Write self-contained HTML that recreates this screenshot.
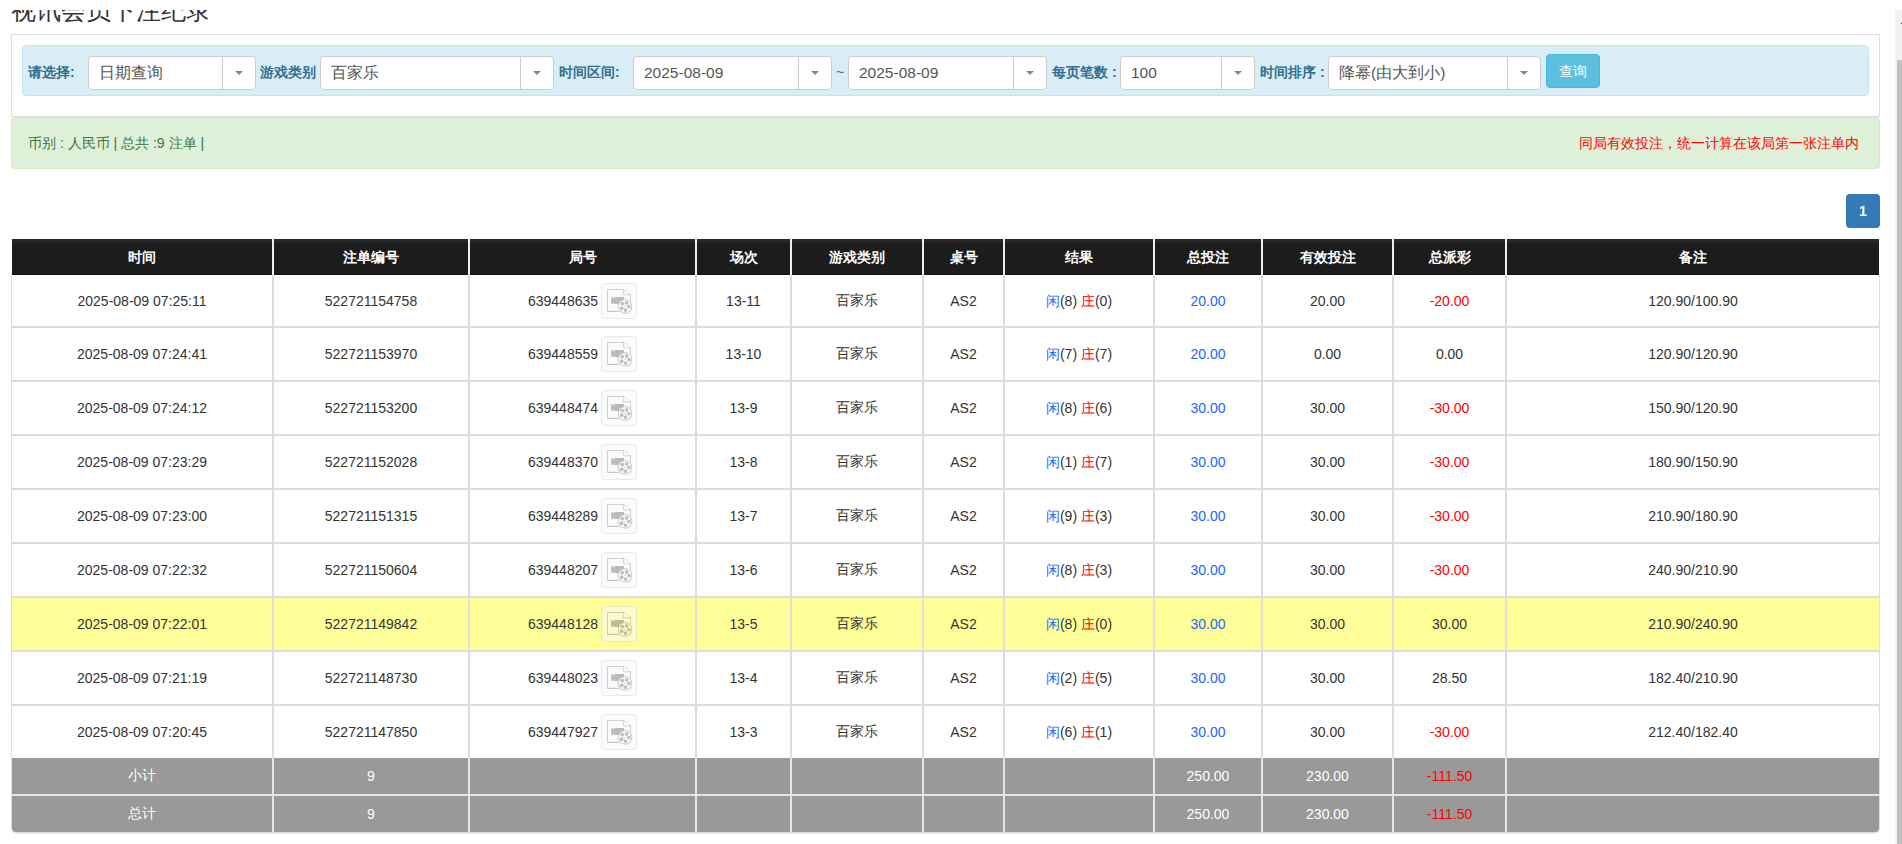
<!DOCTYPE html>
<html><head><meta charset="utf-8">
<style>
*{box-sizing:border-box;margin:0;padding:0}
html,body{width:1902px;height:844px;overflow:hidden;background:#fff;font-family:"Liberation Sans",sans-serif;color:#333;font-size:14px}
.a{position:absolute}
#title{left:11px;top:-5px;font-size:25px;line-height:30px;color:#333;white-space:nowrap}
#mask{left:0;top:0;width:1902px;height:10px;background:#fff}
#panel{left:11px;top:34px;width:1869px;height:83px;border:1px solid #ddd;background:#fff}
#info{left:22px;top:45px;width:1847px;height:51px;background:#d9edf7;border:1px solid #bce8f1;border-radius:4px}
.lbl{top:64px;font-size:14px;line-height:17px;font-weight:bold;color:#31708f;white-space:nowrap}
.sel{top:56px;height:34px;border:1px solid #ccc;border-radius:4px;background:#fff}
.sel .t{position:absolute;left:10px;top:6.5px;font-size:15.5px;line-height:18px;color:#555;white-space:nowrap}
.sel .d{position:absolute;top:0;bottom:0;width:1px;background:#ccc}
.sel .c{position:absolute;top:14px;width:0;height:0;border-left:4px solid transparent;border-right:4px solid transparent;border-top:4px solid #888}
#btn{left:1546px;top:54px;width:54px;height:34px;background:#5bc0de;border:1px solid #46b8da;border-radius:4px;color:#fff;font-size:14px;line-height:32px;text-align:center}
#alert{left:11px;top:117px;width:1869px;height:52px;background:#dff0d8;border:1px solid #d6e9c6;border-radius:4px}
#alert .l{position:absolute;left:16px;top:16px;color:#3c763d;font-size:14px;line-height:18px;white-space:nowrap}
#alert .r{position:absolute;right:20px;top:16px;color:#f00;font-size:14px;line-height:18px;white-space:nowrap}
#page{left:1846px;top:194px;width:34px;height:34px;background:#337ab7;border-radius:4px;color:#fff;font-weight:bold;font-size:14px;line-height:34px;text-align:center}
#sb{left:1895px;top:10px;width:17px;height:900px;background:#f1f1f1}
#sbt{left:1897px;top:60px;width:13px;height:900px;background:#c1c1c1}
.th-bg{left:12px;top:239px;width:1867px;height:36px;background:linear-gradient(#2a2a2a,#262626 3px,#1c1c1c 5px,#1c1c1c 35px,#121212 35px)}
.hsep{top:238px;width:2px;height:37px;background:#eee}
.cell{display:flex;align-items:center;justify-content:center;white-space:nowrap;height:30px}
.th{top:243px;color:#fff;font-weight:bold;font-size:14px}
.td{color:#333;font-size:14px}
.tg{color:#fff;font-size:14px}
.tr{left:12px;width:1867px;background:#fff}
.tr.y{background:#ffff99}
.rsep{left:11px;width:1869px;height:2px;background:#ddd}
.gr{left:12px;width:1867px;background:#999}
.gr2{border-radius:0 0 4px 4px;box-shadow:0 1px 2px rgba(0,0,0,.2)}
.gsep{left:12px;width:1867px;height:2px;background:#e5e5e5}
.vsep{top:275px;height:483px;width:2px;background:#ddd}
.gvsep{top:758px;height:74px;width:2px;background:#e5e5e5}
.vedge{top:275px;height:554px;width:1px;background:#ddd}
.bl{color:#1a66ff;font-weight:normal}
.rd{color:#f00;font-weight:normal}
.ic{display:inline-block;vertical-align:middle;width:36px;height:36px;margin-left:3px;border:1px solid rgba(0,0,0,.07);border-radius:4px;background:rgba(247,247,247,.55)}
.jg{position:relative;top:1px;font-style:normal}
.ji{display:inline-flex;align-items:center;font-style:normal}
.ic svg{display:block;margin:-1px}
</style></head><body>
<svg width="0" height="0" style="position:absolute"><defs><mask id="rm"><rect width="36" height="36" fill="#fff"/><circle cx="24.1" cy="23.4" r="7.2" fill="#000"/></mask></defs></svg>
<div id="title" class="a">视讯会员下注纪录</div>
<div id="mask" class="a"></div>
<div id="panel" class="a"></div>
<div id="info" class="a"></div>
<div class="a lbl" style="left:28px">请选择:</div>
<div class="a sel" style="left:88px;width:168px"><span class="t">日期查询</span><i class="d" style="left:133px"></i><i class="c" style="left:146px"></i></div>
<div class="a lbl" style="left:260px">游戏类别</div>
<div class="a sel" style="left:320px;width:234px"><span class="t">百家乐</span><i class="d" style="left:199px"></i><i class="c" style="left:212px"></i></div>
<div class="a lbl" style="left:559px">时间区间:</div>
<div class="a sel" style="left:633px;width:199px"><span class="t">2025-08-09</span><i class="d" style="left:164px"></i><i class="c" style="left:177px"></i></div>
<div class="a" style="left:836px;top:64px;line-height:17px;font-size:14px;color:#31708f">~</div>
<div class="a sel" style="left:848px;width:199px"><span class="t">2025-08-09</span><i class="d" style="left:164px"></i><i class="c" style="left:177px"></i></div>
<div class="a lbl" style="left:1052px">每页笔数 :</div>
<div class="a sel" style="left:1120px;width:135px"><span class="t">100</span><i class="d" style="left:100px"></i><i class="c" style="left:113px"></i></div>
<div class="a lbl" style="left:1260px">时间排序 :</div>
<div class="a sel" style="left:1328px;width:213px"><span class="t">降幂(由大到小)</span><i class="d" style="left:178px"></i><i class="c" style="left:191px"></i></div>
<div id="btn" class="a">查询</div>
<div id="alert" class="a"><span class="l">币别 : 人民币 | 总共 :9 注单 |</span><span class="r">同局有效投注，统一计算在该局第一张注单内</span></div>
<div id="page" class="a">1</div>
<!--TABLE-->
<div class="a th-bg"></div>
<i class="a hsep" style="left:272px"></i>
<i class="a hsep" style="left:468px"></i>
<i class="a hsep" style="left:695px"></i>
<i class="a hsep" style="left:790px"></i>
<i class="a hsep" style="left:922px"></i>
<i class="a hsep" style="left:1003px"></i>
<i class="a hsep" style="left:1153px"></i>
<i class="a hsep" style="left:1261px"></i>
<i class="a hsep" style="left:1392px"></i>
<i class="a hsep" style="left:1505px"></i>
<div class="a cell th" style="left:12px;width:260px">时间</div>
<div class="a cell th" style="left:274px;width:194px">注单编号</div>
<div class="a cell th" style="left:470px;width:225px">局号</div>
<div class="a cell th" style="left:697px;width:93px">场次</div>
<div class="a cell th" style="left:792px;width:130px">游戏类别</div>
<div class="a cell th" style="left:924px;width:79px">桌号</div>
<div class="a cell th" style="left:1005px;width:148px">结果</div>
<div class="a cell th" style="left:1155px;width:106px">总投注</div>
<div class="a cell th" style="left:1263px;width:129px">有效投注</div>
<div class="a cell th" style="left:1394px;width:111px">总派彩</div>
<div class="a cell th" style="left:1507px;width:372px">备注</div>
<div class="a tr" style="top:275px;height:51px"></div>
<div class="a cell td" style="left:12px;width:260px;top:286px"><span>2025-08-09 07:25:11</span></div>
<div class="a cell td" style="left:274px;width:194px;top:286px"><span>522721154758</span></div>
<div class="a cell td" style="left:470px;width:225px;top:286px"><span><em class="ji">639448635<span class="ic"><svg width="36" height="36" viewBox="0 0 36 36"><g mask="url(#rm)"><path d="M6.5 6.5H22.6L29.5 11.8V28.3H6.5Z" fill="none" stroke="rgba(0,0,0,.17)" stroke-width="1"/><path d="M22.6 6.5V11.8H29.5" fill="rgba(255,255,255,.6)" stroke="rgba(0,0,0,.17)" stroke-width="1"/><path d="M6.5 28.4H17" stroke="rgba(0,0,0,.12)" stroke-width="1"/><path d="M10.2 14.2H11.6L13.3 16V14.1H23.1V21.1H13.3V19.6L11.6 21H10.2Z" fill="rgba(0,0,0,.26)"/></g><circle cx="24.1" cy="23.4" r="6.8" fill="none" stroke="rgba(0,0,0,.2)" stroke-width="1"/><g fill="rgba(0,0,0,.24)"><circle cx="21.3" cy="20.6" r="1.85"/><circle cx="25.6" cy="19.9" r="1.85"/><circle cx="27.9" cy="23.6" r="1.85"/><circle cx="24.5" cy="27.1" r="1.85"/><circle cx="20.7" cy="25.2" r="1.85"/><rect x="23.3" y="23" width="1.6" height=".8"/></g></svg></span></em></span></div>
<div class="a cell td" style="left:697px;width:93px;top:286px"><span>13-11</span></div>
<div class="a cell td" style="left:792px;width:130px;top:286px"><span>百家乐</span></div>
<div class="a cell td" style="left:924px;width:79px;top:286px"><span>AS2</span></div>
<div class="a cell td" style="left:1005px;width:148px;top:286px"><span><em class="jg"><b class="bl">闲</b>(8) <b class="rd">庄</b>(0)</em></span></div>
<div class="a cell td" style="left:1155px;width:106px;top:286px"><span><span class="bl">20.00</span></span></div>
<div class="a cell td" style="left:1263px;width:129px;top:286px"><span>20.00</span></div>
<div class="a cell td" style="left:1394px;width:111px;top:286px"><span><span class="rd">-20.00</span></span></div>
<div class="a cell td" style="left:1507px;width:372px;top:286px"><span>120.90/100.90</span></div>
<div class="a tr" style="top:328px;height:52px"></div>
<div class="a cell td" style="left:12px;width:260px;top:339px"><span>2025-08-09 07:24:41</span></div>
<div class="a cell td" style="left:274px;width:194px;top:339px"><span>522721153970</span></div>
<div class="a cell td" style="left:470px;width:225px;top:339px"><span><em class="ji">639448559<span class="ic"><svg width="36" height="36" viewBox="0 0 36 36"><g mask="url(#rm)"><path d="M6.5 6.5H22.6L29.5 11.8V28.3H6.5Z" fill="none" stroke="rgba(0,0,0,.17)" stroke-width="1"/><path d="M22.6 6.5V11.8H29.5" fill="rgba(255,255,255,.6)" stroke="rgba(0,0,0,.17)" stroke-width="1"/><path d="M6.5 28.4H17" stroke="rgba(0,0,0,.12)" stroke-width="1"/><path d="M10.2 14.2H11.6L13.3 16V14.1H23.1V21.1H13.3V19.6L11.6 21H10.2Z" fill="rgba(0,0,0,.26)"/></g><circle cx="24.1" cy="23.4" r="6.8" fill="none" stroke="rgba(0,0,0,.2)" stroke-width="1"/><g fill="rgba(0,0,0,.24)"><circle cx="21.3" cy="20.6" r="1.85"/><circle cx="25.6" cy="19.9" r="1.85"/><circle cx="27.9" cy="23.6" r="1.85"/><circle cx="24.5" cy="27.1" r="1.85"/><circle cx="20.7" cy="25.2" r="1.85"/><rect x="23.3" y="23" width="1.6" height=".8"/></g></svg></span></em></span></div>
<div class="a cell td" style="left:697px;width:93px;top:339px"><span>13-10</span></div>
<div class="a cell td" style="left:792px;width:130px;top:339px"><span>百家乐</span></div>
<div class="a cell td" style="left:924px;width:79px;top:339px"><span>AS2</span></div>
<div class="a cell td" style="left:1005px;width:148px;top:339px"><span><em class="jg"><b class="bl">闲</b>(7) <b class="rd">庄</b>(7)</em></span></div>
<div class="a cell td" style="left:1155px;width:106px;top:339px"><span><span class="bl">20.00</span></span></div>
<div class="a cell td" style="left:1263px;width:129px;top:339px"><span>0.00</span></div>
<div class="a cell td" style="left:1394px;width:111px;top:339px"><span>0.00</span></div>
<div class="a cell td" style="left:1507px;width:372px;top:339px"><span>120.90/120.90</span></div>
<div class="a tr" style="top:382px;height:52px"></div>
<div class="a cell td" style="left:12px;width:260px;top:393px"><span>2025-08-09 07:24:12</span></div>
<div class="a cell td" style="left:274px;width:194px;top:393px"><span>522721153200</span></div>
<div class="a cell td" style="left:470px;width:225px;top:393px"><span><em class="ji">639448474<span class="ic"><svg width="36" height="36" viewBox="0 0 36 36"><g mask="url(#rm)"><path d="M6.5 6.5H22.6L29.5 11.8V28.3H6.5Z" fill="none" stroke="rgba(0,0,0,.17)" stroke-width="1"/><path d="M22.6 6.5V11.8H29.5" fill="rgba(255,255,255,.6)" stroke="rgba(0,0,0,.17)" stroke-width="1"/><path d="M6.5 28.4H17" stroke="rgba(0,0,0,.12)" stroke-width="1"/><path d="M10.2 14.2H11.6L13.3 16V14.1H23.1V21.1H13.3V19.6L11.6 21H10.2Z" fill="rgba(0,0,0,.26)"/></g><circle cx="24.1" cy="23.4" r="6.8" fill="none" stroke="rgba(0,0,0,.2)" stroke-width="1"/><g fill="rgba(0,0,0,.24)"><circle cx="21.3" cy="20.6" r="1.85"/><circle cx="25.6" cy="19.9" r="1.85"/><circle cx="27.9" cy="23.6" r="1.85"/><circle cx="24.5" cy="27.1" r="1.85"/><circle cx="20.7" cy="25.2" r="1.85"/><rect x="23.3" y="23" width="1.6" height=".8"/></g></svg></span></em></span></div>
<div class="a cell td" style="left:697px;width:93px;top:393px"><span>13-9</span></div>
<div class="a cell td" style="left:792px;width:130px;top:393px"><span>百家乐</span></div>
<div class="a cell td" style="left:924px;width:79px;top:393px"><span>AS2</span></div>
<div class="a cell td" style="left:1005px;width:148px;top:393px"><span><em class="jg"><b class="bl">闲</b>(8) <b class="rd">庄</b>(6)</em></span></div>
<div class="a cell td" style="left:1155px;width:106px;top:393px"><span><span class="bl">30.00</span></span></div>
<div class="a cell td" style="left:1263px;width:129px;top:393px"><span>30.00</span></div>
<div class="a cell td" style="left:1394px;width:111px;top:393px"><span><span class="rd">-30.00</span></span></div>
<div class="a cell td" style="left:1507px;width:372px;top:393px"><span>150.90/120.90</span></div>
<div class="a tr" style="top:436px;height:52px"></div>
<div class="a cell td" style="left:12px;width:260px;top:447px"><span>2025-08-09 07:23:29</span></div>
<div class="a cell td" style="left:274px;width:194px;top:447px"><span>522721152028</span></div>
<div class="a cell td" style="left:470px;width:225px;top:447px"><span><em class="ji">639448370<span class="ic"><svg width="36" height="36" viewBox="0 0 36 36"><g mask="url(#rm)"><path d="M6.5 6.5H22.6L29.5 11.8V28.3H6.5Z" fill="none" stroke="rgba(0,0,0,.17)" stroke-width="1"/><path d="M22.6 6.5V11.8H29.5" fill="rgba(255,255,255,.6)" stroke="rgba(0,0,0,.17)" stroke-width="1"/><path d="M6.5 28.4H17" stroke="rgba(0,0,0,.12)" stroke-width="1"/><path d="M10.2 14.2H11.6L13.3 16V14.1H23.1V21.1H13.3V19.6L11.6 21H10.2Z" fill="rgba(0,0,0,.26)"/></g><circle cx="24.1" cy="23.4" r="6.8" fill="none" stroke="rgba(0,0,0,.2)" stroke-width="1"/><g fill="rgba(0,0,0,.24)"><circle cx="21.3" cy="20.6" r="1.85"/><circle cx="25.6" cy="19.9" r="1.85"/><circle cx="27.9" cy="23.6" r="1.85"/><circle cx="24.5" cy="27.1" r="1.85"/><circle cx="20.7" cy="25.2" r="1.85"/><rect x="23.3" y="23" width="1.6" height=".8"/></g></svg></span></em></span></div>
<div class="a cell td" style="left:697px;width:93px;top:447px"><span>13-8</span></div>
<div class="a cell td" style="left:792px;width:130px;top:447px"><span>百家乐</span></div>
<div class="a cell td" style="left:924px;width:79px;top:447px"><span>AS2</span></div>
<div class="a cell td" style="left:1005px;width:148px;top:447px"><span><em class="jg"><b class="bl">闲</b>(1) <b class="rd">庄</b>(7)</em></span></div>
<div class="a cell td" style="left:1155px;width:106px;top:447px"><span><span class="bl">30.00</span></span></div>
<div class="a cell td" style="left:1263px;width:129px;top:447px"><span>30.00</span></div>
<div class="a cell td" style="left:1394px;width:111px;top:447px"><span><span class="rd">-30.00</span></span></div>
<div class="a cell td" style="left:1507px;width:372px;top:447px"><span>180.90/150.90</span></div>
<div class="a tr" style="top:490px;height:52px"></div>
<div class="a cell td" style="left:12px;width:260px;top:501px"><span>2025-08-09 07:23:00</span></div>
<div class="a cell td" style="left:274px;width:194px;top:501px"><span>522721151315</span></div>
<div class="a cell td" style="left:470px;width:225px;top:501px"><span><em class="ji">639448289<span class="ic"><svg width="36" height="36" viewBox="0 0 36 36"><g mask="url(#rm)"><path d="M6.5 6.5H22.6L29.5 11.8V28.3H6.5Z" fill="none" stroke="rgba(0,0,0,.17)" stroke-width="1"/><path d="M22.6 6.5V11.8H29.5" fill="rgba(255,255,255,.6)" stroke="rgba(0,0,0,.17)" stroke-width="1"/><path d="M6.5 28.4H17" stroke="rgba(0,0,0,.12)" stroke-width="1"/><path d="M10.2 14.2H11.6L13.3 16V14.1H23.1V21.1H13.3V19.6L11.6 21H10.2Z" fill="rgba(0,0,0,.26)"/></g><circle cx="24.1" cy="23.4" r="6.8" fill="none" stroke="rgba(0,0,0,.2)" stroke-width="1"/><g fill="rgba(0,0,0,.24)"><circle cx="21.3" cy="20.6" r="1.85"/><circle cx="25.6" cy="19.9" r="1.85"/><circle cx="27.9" cy="23.6" r="1.85"/><circle cx="24.5" cy="27.1" r="1.85"/><circle cx="20.7" cy="25.2" r="1.85"/><rect x="23.3" y="23" width="1.6" height=".8"/></g></svg></span></em></span></div>
<div class="a cell td" style="left:697px;width:93px;top:501px"><span>13-7</span></div>
<div class="a cell td" style="left:792px;width:130px;top:501px"><span>百家乐</span></div>
<div class="a cell td" style="left:924px;width:79px;top:501px"><span>AS2</span></div>
<div class="a cell td" style="left:1005px;width:148px;top:501px"><span><em class="jg"><b class="bl">闲</b>(9) <b class="rd">庄</b>(3)</em></span></div>
<div class="a cell td" style="left:1155px;width:106px;top:501px"><span><span class="bl">30.00</span></span></div>
<div class="a cell td" style="left:1263px;width:129px;top:501px"><span>30.00</span></div>
<div class="a cell td" style="left:1394px;width:111px;top:501px"><span><span class="rd">-30.00</span></span></div>
<div class="a cell td" style="left:1507px;width:372px;top:501px"><span>210.90/180.90</span></div>
<div class="a tr" style="top:544px;height:52px"></div>
<div class="a cell td" style="left:12px;width:260px;top:555px"><span>2025-08-09 07:22:32</span></div>
<div class="a cell td" style="left:274px;width:194px;top:555px"><span>522721150604</span></div>
<div class="a cell td" style="left:470px;width:225px;top:555px"><span><em class="ji">639448207<span class="ic"><svg width="36" height="36" viewBox="0 0 36 36"><g mask="url(#rm)"><path d="M6.5 6.5H22.6L29.5 11.8V28.3H6.5Z" fill="none" stroke="rgba(0,0,0,.17)" stroke-width="1"/><path d="M22.6 6.5V11.8H29.5" fill="rgba(255,255,255,.6)" stroke="rgba(0,0,0,.17)" stroke-width="1"/><path d="M6.5 28.4H17" stroke="rgba(0,0,0,.12)" stroke-width="1"/><path d="M10.2 14.2H11.6L13.3 16V14.1H23.1V21.1H13.3V19.6L11.6 21H10.2Z" fill="rgba(0,0,0,.26)"/></g><circle cx="24.1" cy="23.4" r="6.8" fill="none" stroke="rgba(0,0,0,.2)" stroke-width="1"/><g fill="rgba(0,0,0,.24)"><circle cx="21.3" cy="20.6" r="1.85"/><circle cx="25.6" cy="19.9" r="1.85"/><circle cx="27.9" cy="23.6" r="1.85"/><circle cx="24.5" cy="27.1" r="1.85"/><circle cx="20.7" cy="25.2" r="1.85"/><rect x="23.3" y="23" width="1.6" height=".8"/></g></svg></span></em></span></div>
<div class="a cell td" style="left:697px;width:93px;top:555px"><span>13-6</span></div>
<div class="a cell td" style="left:792px;width:130px;top:555px"><span>百家乐</span></div>
<div class="a cell td" style="left:924px;width:79px;top:555px"><span>AS2</span></div>
<div class="a cell td" style="left:1005px;width:148px;top:555px"><span><em class="jg"><b class="bl">闲</b>(8) <b class="rd">庄</b>(3)</em></span></div>
<div class="a cell td" style="left:1155px;width:106px;top:555px"><span><span class="bl">30.00</span></span></div>
<div class="a cell td" style="left:1263px;width:129px;top:555px"><span>30.00</span></div>
<div class="a cell td" style="left:1394px;width:111px;top:555px"><span><span class="rd">-30.00</span></span></div>
<div class="a cell td" style="left:1507px;width:372px;top:555px"><span>240.90/210.90</span></div>
<div class="a tr y" style="top:598px;height:52px"></div>
<div class="a cell td" style="left:12px;width:260px;top:609px"><span>2025-08-09 07:22:01</span></div>
<div class="a cell td" style="left:274px;width:194px;top:609px"><span>522721149842</span></div>
<div class="a cell td" style="left:470px;width:225px;top:609px"><span><em class="ji">639448128<span class="ic"><svg width="36" height="36" viewBox="0 0 36 36"><g mask="url(#rm)"><path d="M6.5 6.5H22.6L29.5 11.8V28.3H6.5Z" fill="none" stroke="rgba(0,0,0,.17)" stroke-width="1"/><path d="M22.6 6.5V11.8H29.5" fill="rgba(255,255,255,.6)" stroke="rgba(0,0,0,.17)" stroke-width="1"/><path d="M6.5 28.4H17" stroke="rgba(0,0,0,.12)" stroke-width="1"/><path d="M10.2 14.2H11.6L13.3 16V14.1H23.1V21.1H13.3V19.6L11.6 21H10.2Z" fill="rgba(0,0,0,.26)"/></g><circle cx="24.1" cy="23.4" r="6.8" fill="none" stroke="rgba(0,0,0,.2)" stroke-width="1"/><g fill="rgba(0,0,0,.24)"><circle cx="21.3" cy="20.6" r="1.85"/><circle cx="25.6" cy="19.9" r="1.85"/><circle cx="27.9" cy="23.6" r="1.85"/><circle cx="24.5" cy="27.1" r="1.85"/><circle cx="20.7" cy="25.2" r="1.85"/><rect x="23.3" y="23" width="1.6" height=".8"/></g></svg></span></em></span></div>
<div class="a cell td" style="left:697px;width:93px;top:609px"><span>13-5</span></div>
<div class="a cell td" style="left:792px;width:130px;top:609px"><span>百家乐</span></div>
<div class="a cell td" style="left:924px;width:79px;top:609px"><span>AS2</span></div>
<div class="a cell td" style="left:1005px;width:148px;top:609px"><span><em class="jg"><b class="bl">闲</b>(8) <b class="rd">庄</b>(0)</em></span></div>
<div class="a cell td" style="left:1155px;width:106px;top:609px"><span><span class="bl">30.00</span></span></div>
<div class="a cell td" style="left:1263px;width:129px;top:609px"><span>30.00</span></div>
<div class="a cell td" style="left:1394px;width:111px;top:609px"><span>30.00</span></div>
<div class="a cell td" style="left:1507px;width:372px;top:609px"><span>210.90/240.90</span></div>
<div class="a tr" style="top:652px;height:52px"></div>
<div class="a cell td" style="left:12px;width:260px;top:663px"><span>2025-08-09 07:21:19</span></div>
<div class="a cell td" style="left:274px;width:194px;top:663px"><span>522721148730</span></div>
<div class="a cell td" style="left:470px;width:225px;top:663px"><span><em class="ji">639448023<span class="ic"><svg width="36" height="36" viewBox="0 0 36 36"><g mask="url(#rm)"><path d="M6.5 6.5H22.6L29.5 11.8V28.3H6.5Z" fill="none" stroke="rgba(0,0,0,.17)" stroke-width="1"/><path d="M22.6 6.5V11.8H29.5" fill="rgba(255,255,255,.6)" stroke="rgba(0,0,0,.17)" stroke-width="1"/><path d="M6.5 28.4H17" stroke="rgba(0,0,0,.12)" stroke-width="1"/><path d="M10.2 14.2H11.6L13.3 16V14.1H23.1V21.1H13.3V19.6L11.6 21H10.2Z" fill="rgba(0,0,0,.26)"/></g><circle cx="24.1" cy="23.4" r="6.8" fill="none" stroke="rgba(0,0,0,.2)" stroke-width="1"/><g fill="rgba(0,0,0,.24)"><circle cx="21.3" cy="20.6" r="1.85"/><circle cx="25.6" cy="19.9" r="1.85"/><circle cx="27.9" cy="23.6" r="1.85"/><circle cx="24.5" cy="27.1" r="1.85"/><circle cx="20.7" cy="25.2" r="1.85"/><rect x="23.3" y="23" width="1.6" height=".8"/></g></svg></span></em></span></div>
<div class="a cell td" style="left:697px;width:93px;top:663px"><span>13-4</span></div>
<div class="a cell td" style="left:792px;width:130px;top:663px"><span>百家乐</span></div>
<div class="a cell td" style="left:924px;width:79px;top:663px"><span>AS2</span></div>
<div class="a cell td" style="left:1005px;width:148px;top:663px"><span><em class="jg"><b class="bl">闲</b>(2) <b class="rd">庄</b>(5)</em></span></div>
<div class="a cell td" style="left:1155px;width:106px;top:663px"><span><span class="bl">30.00</span></span></div>
<div class="a cell td" style="left:1263px;width:129px;top:663px"><span>30.00</span></div>
<div class="a cell td" style="left:1394px;width:111px;top:663px"><span>28.50</span></div>
<div class="a cell td" style="left:1507px;width:372px;top:663px"><span>182.40/210.90</span></div>
<div class="a tr" style="top:706px;height:52px"></div>
<div class="a cell td" style="left:12px;width:260px;top:717px"><span>2025-08-09 07:20:45</span></div>
<div class="a cell td" style="left:274px;width:194px;top:717px"><span>522721147850</span></div>
<div class="a cell td" style="left:470px;width:225px;top:717px"><span><em class="ji">639447927<span class="ic"><svg width="36" height="36" viewBox="0 0 36 36"><g mask="url(#rm)"><path d="M6.5 6.5H22.6L29.5 11.8V28.3H6.5Z" fill="none" stroke="rgba(0,0,0,.17)" stroke-width="1"/><path d="M22.6 6.5V11.8H29.5" fill="rgba(255,255,255,.6)" stroke="rgba(0,0,0,.17)" stroke-width="1"/><path d="M6.5 28.4H17" stroke="rgba(0,0,0,.12)" stroke-width="1"/><path d="M10.2 14.2H11.6L13.3 16V14.1H23.1V21.1H13.3V19.6L11.6 21H10.2Z" fill="rgba(0,0,0,.26)"/></g><circle cx="24.1" cy="23.4" r="6.8" fill="none" stroke="rgba(0,0,0,.2)" stroke-width="1"/><g fill="rgba(0,0,0,.24)"><circle cx="21.3" cy="20.6" r="1.85"/><circle cx="25.6" cy="19.9" r="1.85"/><circle cx="27.9" cy="23.6" r="1.85"/><circle cx="24.5" cy="27.1" r="1.85"/><circle cx="20.7" cy="25.2" r="1.85"/><rect x="23.3" y="23" width="1.6" height=".8"/></g></svg></span></em></span></div>
<div class="a cell td" style="left:697px;width:93px;top:717px"><span>13-3</span></div>
<div class="a cell td" style="left:792px;width:130px;top:717px"><span>百家乐</span></div>
<div class="a cell td" style="left:924px;width:79px;top:717px"><span>AS2</span></div>
<div class="a cell td" style="left:1005px;width:148px;top:717px"><span><em class="jg"><b class="bl">闲</b>(6) <b class="rd">庄</b>(1)</em></span></div>
<div class="a cell td" style="left:1155px;width:106px;top:717px"><span><span class="bl">30.00</span></span></div>
<div class="a cell td" style="left:1263px;width:129px;top:717px"><span>30.00</span></div>
<div class="a cell td" style="left:1394px;width:111px;top:717px"><span><span class="rd">-30.00</span></span></div>
<div class="a cell td" style="left:1507px;width:372px;top:717px"><span>212.40/182.40</span></div>
<i class="a rsep" style="top:326px"></i>
<i class="a rsep" style="top:380px"></i>
<i class="a rsep" style="top:434px"></i>
<i class="a rsep" style="top:488px"></i>
<i class="a rsep" style="top:542px"></i>
<i class="a rsep" style="top:596px"></i>
<i class="a rsep" style="top:650px"></i>
<i class="a rsep" style="top:704px"></i>
<div class="a gr" style="top:758px;height:36px"></div>
<div class="a gsep" style="top:794px"></div>
<div class="a gr gr2" style="top:796px;height:36px"></div>
<i class="a vsep" style="left:272px"></i>
<i class="a gvsep" style="left:272px"></i>
<i class="a vsep" style="left:468px"></i>
<i class="a gvsep" style="left:468px"></i>
<i class="a vsep" style="left:695px"></i>
<i class="a gvsep" style="left:695px"></i>
<i class="a vsep" style="left:790px"></i>
<i class="a gvsep" style="left:790px"></i>
<i class="a vsep" style="left:922px"></i>
<i class="a gvsep" style="left:922px"></i>
<i class="a vsep" style="left:1003px"></i>
<i class="a gvsep" style="left:1003px"></i>
<i class="a vsep" style="left:1153px"></i>
<i class="a gvsep" style="left:1153px"></i>
<i class="a vsep" style="left:1261px"></i>
<i class="a gvsep" style="left:1261px"></i>
<i class="a vsep" style="left:1392px"></i>
<i class="a gvsep" style="left:1392px"></i>
<i class="a vsep" style="left:1505px"></i>
<i class="a gvsep" style="left:1505px"></i>
<i class="a vedge" style="left:11px"></i><i class="a vedge" style="left:1879px"></i>
<div class="a cell tg" style="left:12px;width:260px;top:761px">小计</div>
<div class="a cell tg" style="left:274px;width:194px;top:761px">9</div>
<div class="a cell tg" style="left:1155px;width:106px;top:761px">250.00</div>
<div class="a cell tg" style="left:1263px;width:129px;top:761px">230.00</div>
<div class="a cell tg" style="left:1394px;width:111px;top:761px"><span class="rd">-111.50</span></div>
<div class="a cell tg" style="left:12px;width:260px;top:799px">总计</div>
<div class="a cell tg" style="left:274px;width:194px;top:799px">9</div>
<div class="a cell tg" style="left:1155px;width:106px;top:799px">250.00</div>
<div class="a cell tg" style="left:1263px;width:129px;top:799px">230.00</div>
<div class="a cell tg" style="left:1394px;width:111px;top:799px"><span class="rd">-111.50</span></div>
<!--/TABLE-->
<div id="sb" class="a"></div>
<div id="sbt" class="a"></div>
<div class="a" style="left:1901px;top:23px;width:1px;height:1px;background:#444"></div><div class="a" style="left:1901px;top:22px;width:1px;height:1px;background:#b0b0b0"></div>
</body></html>
